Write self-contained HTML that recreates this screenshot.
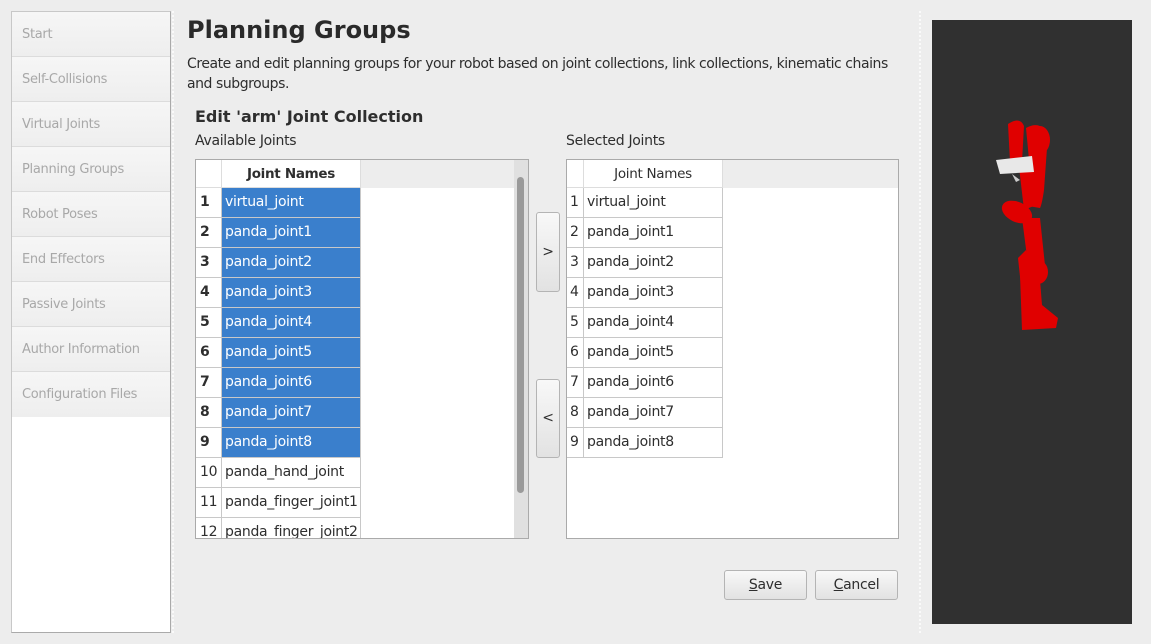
<!DOCTYPE html>
<html><head><meta charset="utf-8"><style>
*{box-sizing:border-box;margin:0;padding:0}
body{width:1151px;height:644px;background:#ededed;font-family:"DejaVu Sans","Liberation Sans",sans-serif;color:#2e2e2e;position:relative;overflow:hidden;font-size:13.5px;letter-spacing:-0.3px}
.a{position:absolute}
.side{left:11px;top:11px;width:160px;height:622px;background:#fff;border:1px solid #c8c8c8;border-right:1px solid #aaa;border-bottom:1px solid #aaa}
.si{position:absolute;left:0;width:158px;height:45px;background:linear-gradient(#f6f6f6,#eeeeee);border-bottom:1px solid #dcdcdc;color:#a8a8a8;font-size:13px;padding-left:10px;line-height:45px}
.tbl{background:#fff;border:1px solid #aaa;overflow:hidden}
.hdr{position:absolute;top:0;height:28px;background:#fff;border-right:1px solid #ddd;border-bottom:1px solid #ddd;font-size:13.5px;text-align:center;line-height:28px}
.row{position:absolute;height:30px;line-height:29px;border-bottom:1px solid #c8c8c8;font-size:14px;white-space:nowrap;overflow:hidden}
.num{border-right:1px solid #c8c8c8;padding-left:4px}
.sel{background:#3a7fcc;color:#fff}
.btn{border:1px solid #b4b4b4;border-radius:3px;background:linear-gradient(#f8f8f8,#e2e2e2);text-align:center;font-size:14px}
</style></head><body>
<div class="a side">
<div class="si" style="top:0">Start</div>
<div class="si" style="top:45px">Self-Collisions</div>
<div class="si" style="top:90px">Virtual Joints</div>
<div class="si" style="top:135px">Planning Groups</div>
<div class="si" style="top:180px">Robot Poses</div>
<div class="si" style="top:225px">End Effectors</div>
<div class="si" style="top:270px">Passive Joints</div>
<div class="si" style="top:315px">Author Information</div>
<div class="si" style="top:360px;border-bottom:none">Configuration Files</div>
</div>
<div class="a" style="left:172px;top:11px;height:622px;border-left:2px dotted #fafafa"></div>
<div class="a" style="left:919px;top:11px;height:622px;border-left:2px dotted #fafafa"></div>
<div class="a" style="left:187px;top:16px;font-size:24px;font-weight:bold;color:#2a2a2a;letter-spacing:0">Planning Groups</div>
<div class="a" style="left:187px;top:54px;width:725px;font-size:14px;line-height:20px;letter-spacing:-0.45px">Create and edit planning groups for your robot based on joint collections, link collections, kinematic chains and subgroups.</div>
<div class="a" style="left:195px;top:107px;font-size:16px;font-weight:bold;letter-spacing:0">Edit 'arm' Joint Collection</div>
<div class="a" style="left:195px;top:133px;font-size:14px">Available Joints</div>
<div class="a" style="left:566px;top:133px;font-size:14px">Selected Joints</div>

<div class="a tbl" style="left:195px;top:159px;width:334px;height:380px">
<div class="a" style="left:0;top:0;width:332px;height:28px;background:#ededed"></div>
<div class="hdr" style="left:0;width:26px"></div>
<div class="hdr" style="left:26px;width:139px;font-weight:bold">Joint Names</div>
<div id="L"></div>
<div class="a" style="left:318px;top:0;width:14px;height:380px;background:#e0e0e0"></div>
<div class="a" style="left:321px;top:17px;width:7px;height:316px;background:#9a9a9a;border-radius:4px"></div>
</div>

<div class="a btn" style="left:536px;top:212px;width:24px;height:80px;line-height:78px">&gt;</div>
<div class="a btn" style="left:536px;top:379px;width:24px;height:79px;line-height:77px">&lt;</div>

<div class="a tbl" style="left:566px;top:159px;width:333px;height:380px">
<div class="a" style="left:0;top:0;width:332px;height:28px;background:#ededed"></div>
<div class="hdr" style="left:0;width:17px"></div>
<div class="hdr" style="left:17px;width:139px">Joint Names</div>
<div id="R"></div>
</div>

<div class="a btn" style="left:724px;top:570px;width:83px;height:30px;line-height:28px"><u>S</u>ave</div>
<div class="a btn" style="left:815px;top:570px;width:83px;height:30px;line-height:28px"><u>C</u>ancel</div>

<div class="a" style="left:932px;top:20px;width:200px;height:604px;background:#303030"></div>
<svg class="a" style="left:960px;top:100px" width="120" height="240" viewBox="0 0 120 240">
<g fill="#e00000">
<path d="M48 24 Q60 16 64 26 L62 62 L50 62 Z"/>
<path d="M66 28 Q80 20 88 34 L84 90 Q82 104 80 108 L68 106 L70 70 Z"/>
<ellipse cx="80" cy="40" rx="10" ry="14"/>
<path d="M58 58 L72 58 L76 105 L64 110 Z"/>
<ellipse cx="57" cy="112" rx="16" ry="10" transform="rotate(25 57 112)"/>
<path d="M62 118 L80 118 L86 175 L70 180 Z"/>
<ellipse cx="78" cy="172" rx="10" ry="12"/>
<path d="M58 158 L66 150 L76 182 L62 195 Z"/>
<path d="M60 175 L80 180 L82 205 L98 218 L96 228 L62 230 Z"/>
</g>
<path d="M36 60 L72 56 L74 72 L40 74 Z" fill="#e8e8e8"/>
<path d="M52 74 L60 80 L56 82Z" fill="#ccc"/>
</svg>
<script>
var L=["virtual_joint","panda_joint1","panda_joint2","panda_joint3","panda_joint4","panda_joint5","panda_joint6","panda_joint7","panda_joint8","panda_hand_joint","panda_finger_joint1","panda_finger_joint2"];
var h="",r="";
for(var i=0;i<12;i++){var t=28+i*30,s=i<9;
h+='<div class="row num" style="left:0;top:'+t+'px;width:26px;'+(s?'font-weight:bold':'')+'">'+(i+1)+'</div><div class="row'+(s?' sel':'')+'" style="left:26px;top:'+t+'px;width:139px;border-right:1px solid #c8c8c8;padding-left:3px">'+L[i]+'</div>';
if(i<9)r+='<div class="row num" style="left:0;top:'+t+'px;width:17px;padding-left:3px">'+(i+1)+'</div><div class="row" style="left:17px;top:'+t+'px;width:139px;border-right:1px solid #c8c8c8;padding-left:3px">'+L[i]+'</div>';}
document.getElementById("L").innerHTML=h;document.getElementById("R").innerHTML=r;
</script>
</body></html>
